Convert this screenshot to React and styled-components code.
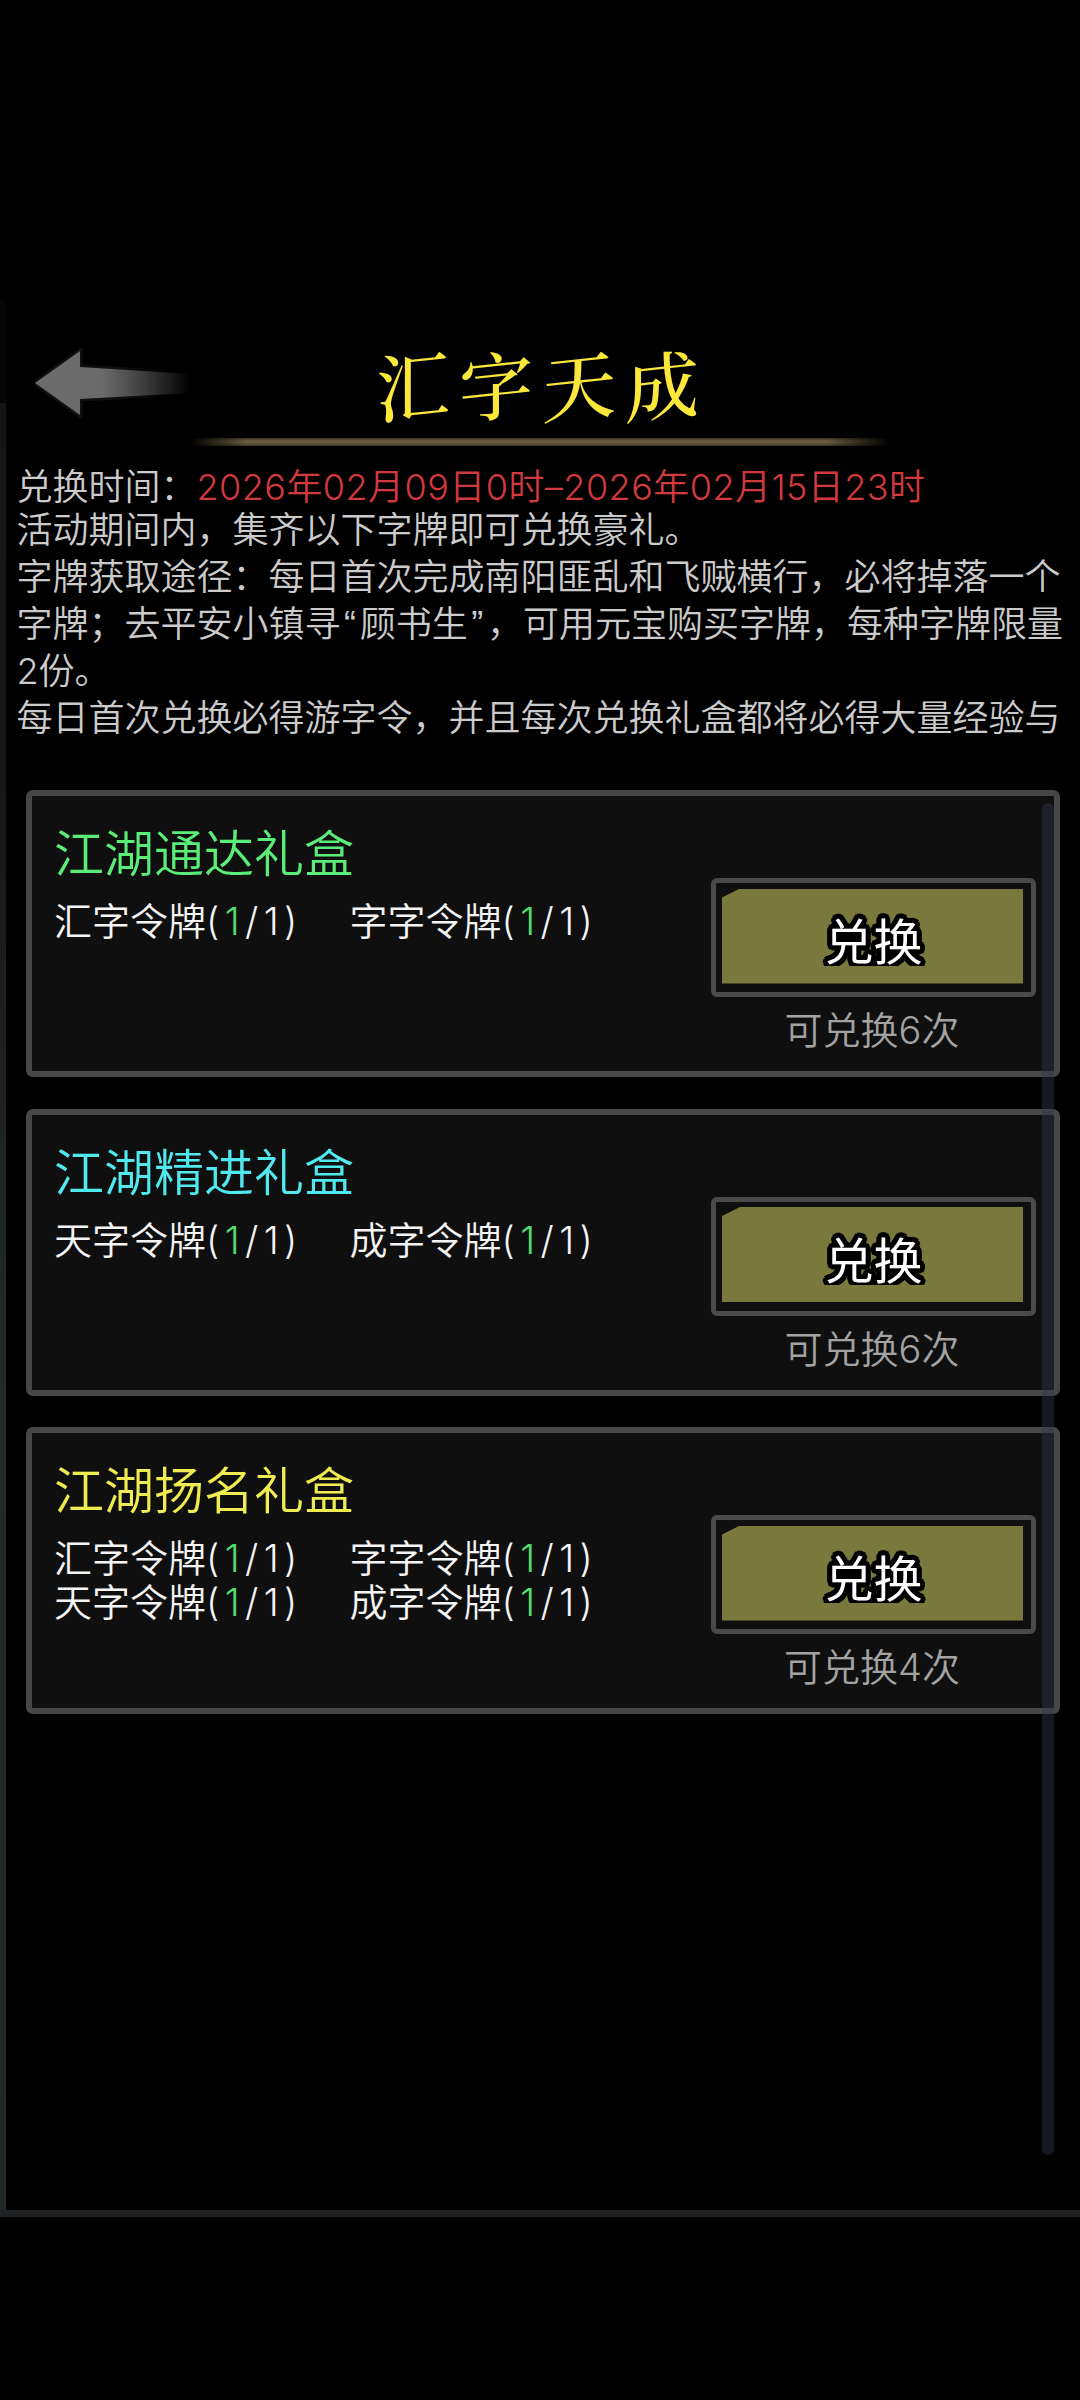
import React from "react";
import styled, { createGlobalStyle } from "styled-components";

const GlobalStyle = createGlobalStyle`
  * { box-sizing: border-box; }
  html, body { margin: 0; background: #000; }
  body {
    font-family: Inter, "Noto Sans CJK SC", sans-serif;
    font-weight: 350;
    overflow: hidden;
  }
`;

const Screen = styled.div`
  width: 1080px;
  height: 2400px;
  padding-top: 300px;
  background: #000;
`;

const Frame = styled.div`
  position: relative;
  display: flex;
  height: 1917px;
  border-bottom: 7px solid #202123;
`;

const Edge = styled.div`
  flex: none;
  width: 6px;
  background: linear-gradient(#050506 0 103px, #14171a 103px, #16191c 480px, #24292c 1100px, #212629 100%);
`;

const Content = styled.main`
  flex: none;
  width: 1074px;
  display: flex;
  flex-direction: column;
`;

const Header = styled.header`
  display: flex;
  align-items: center;
  height: 138px;
  padding: 28px 0 0 29px;
`;

const Arrow = styled.svg`
  flex: none;
  display: block;
  width: 170px;
  height: 70px;
`;

const Title = styled.h1`
  display: flex;
  gap: 9px;
  margin: -2px 0 0 171px;
  font-family: "AR PL UKai CN", KaiTi, STKaiti, "Noto Serif CJK SC", "Noto Sans CJK SC", serif;
  font-size: 74px;
  line-height: 80px;
  font-weight: 500;
  color: #fce83a;
  white-space: nowrap;
`;

const Brushed = styled.span`
  display: block;
  transform: skewY(-6deg);
`;

const Divider = styled.div`
  width: 700px;
  height: 8px;
  margin-left: 184px;
  background: linear-gradient(#3a3324, #655a3e 35%, #655a3e 65%, #3a3324);
  mask-image: linear-gradient(90deg, transparent, #000 8%, #000 91%, transparent);
`;

const Notice = styled.section`
  height: 290px;
  margin: 20px 0 34px 10.5px;
  overflow: hidden;
  color: #cbcbcb;
  font-size: 36px;
  white-space: nowrap;
`;

const NoticeLine = styled.p`
  margin: 0;
  height: ${(p) => (p.$first ? 43 : 47)}px;
  line-height: 42px;
`;

const Period = styled.span`
  letter-spacing: 0.45px;
  color: #d2393d;
`;

const Quote = styled.span`
  padding: 0 3.6px;
  font-family: "Liberation Sans", sans-serif;
`;

const GiftList = styled.div`
  display: flex;
  flex-direction: column;
  gap: 31.5px;
  padding-left: 20px;
`;

const Card = styled.article`
  display: flex;
  justify-content: space-between;
  width: 1034px;
  height: 287px;
  padding: 27px 18px 0 22px;
  background: #0f0f0f;
  border: 6px solid #474747;
  border-radius: 7px;
`;

const GiftName = styled.h2`
  margin: 0 0 15px;
  font-size: 50px;
  line-height: 62px;
  font-weight: 350;
  color: ${(p) => p.$color};
`;

const Costs = styled.div`
  display: grid;
  grid-template-columns: 295.5px 295.5px;
  grid-auto-rows: 43.5px;
  font-size: 38px;
  line-height: 43.5px;
  color: #f4f4f4;
  white-space: nowrap;
`;

const Count = styled.span`
  letter-spacing: 5.4px;
`;

const Owned = styled.span`
  color: #4ede70;
`;

const Action = styled.div`
  display: flex;
  flex-direction: column;
  align-items: center;
  padding-top: 55px;
`;

const RedeemFrame = styled.button`
  width: 325px;
  height: 119px;
  padding: 5px 7px 8px 6px;
  border: 5.5px solid #4a4a4a;
  border-radius: 6px;
  background: #0f0f0f;
  font: inherit;
`;

const RedeemFace = styled.span`
  display: flex;
  align-items: center;
  justify-content: center;
  width: 301px;
  height: 95px;
  background: #7a793d;
  clip-path: polygon(0 9px, 18px 0, 100% 0, 100% 100%, 0 100%);
`;

const outline = Array.from({ length: 24 }, (_, i) => {
  const angle = (i / 24) * Math.PI * 2;
  return `${(Math.cos(angle) * 5).toFixed(2)}px ${(Math.sin(angle) * 5).toFixed(2)}px 0 #000`;
}).join(", ");

const RedeemLabel = styled.span`
  margin: 14px 0 0 2px;
  font-size: 49px;
  line-height: 50px;
  font-weight: 400;
  color: #fff;
  text-shadow: ${outline};
  clip-path: inset(-10px -10px 2px -10px);
`;

const Remaining = styled.span`
  margin-top: 10px;
  padding-right: 3px;
  font-size: 38px;
  line-height: 46px;
  color: #a3a3a3;
`;

const ScrollTrack = styled.div`
  position: absolute;
  top: 503px;
  left: 1042px;
  width: 12px;
  height: 1352px;
  border-radius: 6px;
  background: rgba(49, 56, 76, 0.45);
`;

const notice = [
  ["活动期间内，集齐以下字牌即可兑换豪礼。"],
  ["字牌获取途径：每日首次完成南阳匪乱和飞贼横行，必将掉落一个"],
  ["字牌；去平安小镇寻", <Quote key="open">“</Quote>, "顾书生", <Quote key="close">”</Quote>, "，可用元宝购买字牌，每种字牌限量"],
  ["2份。"],
  ["每日首次兑换必得游字令，并且每次兑换礼盒都将必得大量经验与"],
];

const gifts = [
  { name: "江湖通达礼盒", color: "#5aee79", costs: ["汇字令牌", "字字令牌"], left: 6 },
  { name: "江湖精进礼盒", color: "#4fe9ee", costs: ["天字令牌", "成字令牌"], left: 6 },
  { name: "江湖扬名礼盒", color: "#eeec50", costs: ["汇字令牌", "字字令牌", "天字令牌", "成字令牌"], left: 4 },
];

function Gift({ name, color, costs, left }) {
  return (
    <Card>
      <div>
        <GiftName $color={color}>{name}</GiftName>
        <Costs>
          {costs.map((cost) => (
            <span key={cost}>
              {cost}
              <Count>
                (<Owned>1</Owned>/1)
              </Count>
            </span>
          ))}
        </Costs>
      </div>
      <Action>
        <RedeemFrame>
          <RedeemFace>
            <RedeemLabel>兑换</RedeemLabel>
          </RedeemFace>
        </RedeemFrame>
        <Remaining>可兑换{left}次</Remaining>
      </Action>
    </Card>
  );
}

export default function App() {
  return (
    <Screen>
      <GlobalStyle />
      <Frame>
        <Edge />
        <Content>
          <Header>
            <Arrow viewBox="0 0 170 70">
              <defs>
                <linearGradient id="tail" x1="0" x2="160" y1="0" y2="0" gradientUnits="userSpaceOnUse">
                  <stop offset="0" stopColor="#6c6c6c" />
                  <stop offset="0.42" stopColor="#6a6a6a" />
                  <stop offset="0.58" stopColor="#505050" />
                  <stop offset="0.78" stopColor="#282828" />
                  <stop offset="0.97" stopColor="#000" />
                </linearGradient>
                <linearGradient id="rim" x1="0" x2="160" y1="0" y2="0" gradientUnits="userSpaceOnUse">
                  <stop offset="0.5" stopColor="#101010" />
                  <stop offset="0.9" stopColor="#000" />
                </linearGradient>
              </defs>
              <path
                d="M0 35L45 3V19L155 26V45L45 51V67Z"
                fill="url(#tail)"
                stroke="url(#rim)"
                strokeWidth="5"
                paintOrder="stroke"
              />
            </Arrow>
            <Title>
              {[..."汇字天成"].map((char) => (
                <Brushed key={char}>{char}</Brushed>
              ))}
            </Title>
          </Header>
          <Divider />
          <Notice>
            <NoticeLine $first>
              兑换时间：<Period>2026年02月09日0时–2026年02月15日23时</Period>
            </NoticeLine>
            {notice.map((line, index) => (
              <NoticeLine key={index}>{line}</NoticeLine>
            ))}
          </Notice>
          <GiftList>
            {gifts.map((gift) => (
              <Gift key={gift.name} {...gift} />
            ))}
          </GiftList>
        </Content>
        <ScrollTrack />
      </Frame>
    </Screen>
  );
}
